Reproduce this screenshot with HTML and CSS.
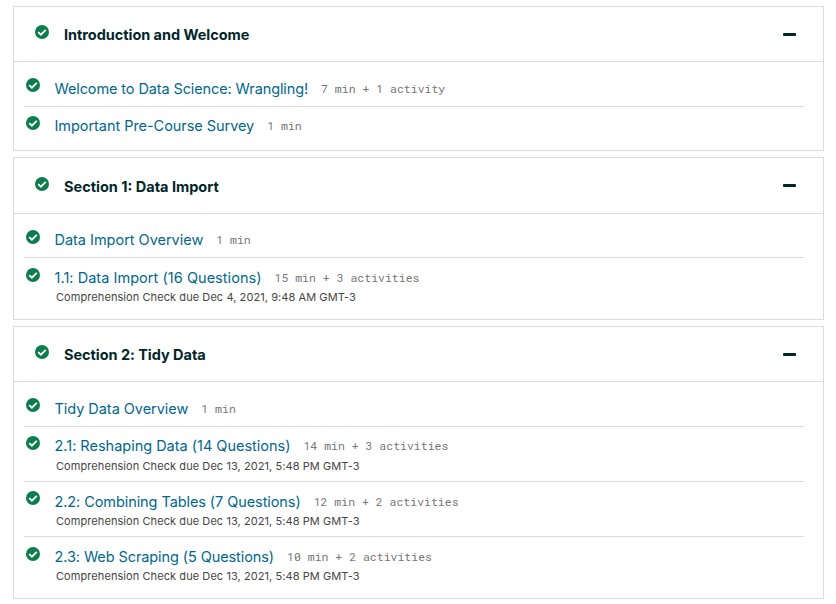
FILE: index.html
```
<!DOCTYPE html>
<html lang="en">
<head>
<meta charset="utf-8">
<title>Course outline</title>
<link rel="stylesheet" href="styles.css">
</head>
<body>
<svg class="defs" width="0" height="0"><defs><symbol id="check" viewBox="0 0 14 14"><circle cx="7" cy="7" r="7"/><path d="M3.2 7.1 5.9 9.7 10.8 4.8" fill="none" stroke="#fff" stroke-width="1.8"/></symbol></defs></svg>
<main class="outline">
<section class="card intro">
<header class="head"><svg class="check"><use href="#check"/></svg><h2 class="t1">Introduction and Welcome</h2><i class="minus"></i></header>
<ul>
<li class="r45 mid"><svg class="check"><use href="#check"/></svg><div class="body"><a class="a1">Welcome to Data Science: Wrangling!</a><span class="time">7 min + 1 activity</span></div></li>
<li class="r44"><svg class="check"><use href="#check"/></svg><div class="body"><a class="a2">Important Pre-Course Survey</a><span class="time">1 min</span></div></li>
</ul>
</section>
<section class="card import">
<header class="head"><svg class="check"><use href="#check"/></svg><h2 class="t2">Section 1: Data Import</h2><i class="minus"></i></header>
<ul>
<li class="r44"><svg class="check"><use href="#check"/></svg><div class="body"><a class="a3">Data Import Overview</a><span class="time">1 min</span></div></li>
<li class="r62 low"><svg class="check"><use href="#check"/></svg><div class="body"><a class="a4">1.1: Data Import (16 Questions)</a><span class="time">15 min + 3 activities</span><p>Comprehension Check due Dec 4, 2021, 9:48 AM GMT-3</p></div></li>
</ul>
</section>
<section class="card tidy">
<header class="head"><svg class="check"><use href="#check"/></svg><h2 class="t3">Section 2: Tidy Data</h2><i class="minus"></i></header>
<ul>
<li class="r45 mid"><svg class="check"><use href="#check"/></svg><div class="body"><a class="a5">Tidy Data Overview</a><span class="time">1 min</span></div></li>
<li class="r55 spaced"><svg class="check"><use href="#check"/></svg><div class="body"><a class="a6">2.1: Reshaping Data (14 Questions)</a><span class="time">14 min + 3 activities</span><p>Comprehension Check due Dec 13, 2021, 5:48 PM GMT-3</p></div></li>
<li class="r55 mid"><svg class="check"><use href="#check"/></svg><div class="body"><a class="a7">2.2: Combining Tables (7 Questions)</a><span class="time">12 min + 2 activities</span><p>Comprehension Check due Dec 13, 2021, 5:48 PM GMT-3</p></div></li>
<li class="r62 low"><svg class="check"><use href="#check"/></svg><div class="body"><a class="a8">2.3: Web Scraping (5 Questions)</a><span class="time">10 min + 2 activities</span><p>Comprehension Check due Dec 13, 2021, 5:48 PM GMT-3</p></div></li>
</ul>
</section>
</main>
</body>
</html>
```
FILE: styles.css
```
* { box-sizing: border-box; }
body { margin: 0; background: #fff; font-family: Inter, "Liberation Sans", sans-serif; }
.defs { display: block; }
.outline { padding: 6px 12px 0 13px; display: flex; flex-direction: column; gap: 6px; }
.card { border: 1px solid #dcdcdc; }
.intro { height: 145px; }
.import { height: 163px; }
.tidy { height: 273px; }
.head { height: 55px; display: flex; align-items: center; padding: 0 27px 0 21px; border-bottom: 1px solid #dcdcdc; }
.head .check { margin: -4px 15px 0 0; }
.import .head { height: 56px; }
h2 { margin: 2px 0 0; font-size: 14.5px; line-height: 20px; font-weight: 700; color: #00262b; white-space: nowrap; letter-spacing: -0.04px; }
.t2 { letter-spacing: 0; }
.minus { width: 13px; height: 3px; background: #00262b; margin-left: auto; border-radius: 1px; }
.check { width: 14px; height: 14px; fill: #0d7d4d; flex: none; }
ul { list-style: none; margin: 0 19px 0 10px; padding: 0; }
li { display: flex; border-bottom: 1px solid #dcdcdc; padding: 9px 0 0 2px; }
li:first-child { padding-top: 16px; }
li:last-child { border-bottom: 0; }
.low { padding-top: 10px; }
.r44 { height: 44px; }
.r45 { height: 45px; }
.r55 { height: 55px; }
.r62 { height: 62px; }
.body { margin: -1px 0 0 14.5px; white-space: nowrap; line-height: 20px; }
.mid .body { margin-top: 0; }
a { font-size: 14.5px; color: #00688d; }
.a1 { letter-spacing: -0.11px; }
.a2 { letter-spacing: -0.05px; }
.a3 { letter-spacing: -0.02px; }
.a4 { letter-spacing: 0.04px; }
.a5 { letter-spacing: -0.04px; }
.a6 { letter-spacing: -0.01px; }
.a7 { letter-spacing: -0.08px; }
.a8 { letter-spacing: -0.09px; }
.time { font-family: "Roboto Mono", "DejaVu Sans Mono", "Liberation Mono", monospace; font-size: 11.5px; line-height: 16px; vertical-align: 1px; color: #777; margin-left: 13px; }
p { margin: 1px 0 0 1.5px; font-size: 11px; line-height: 16px; color: #454545; letter-spacing: 0.075px; }
.spaced p { margin-top: 2px; }
```
